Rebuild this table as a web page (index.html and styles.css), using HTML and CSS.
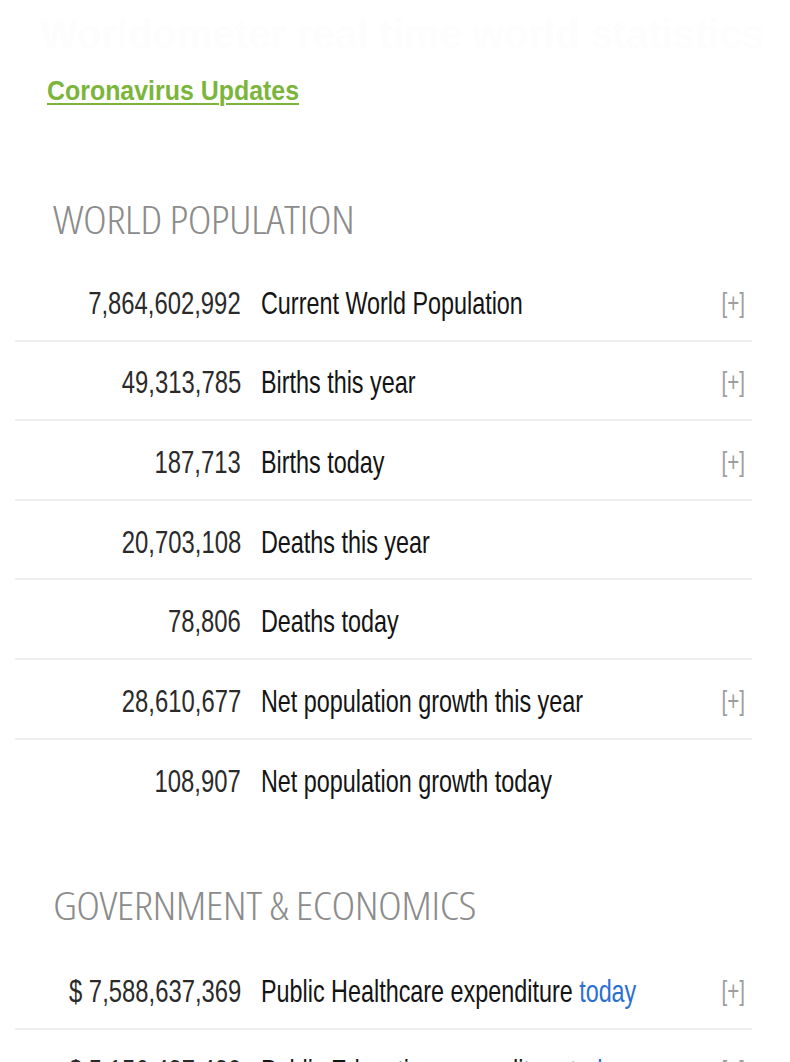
FILE: index.html
```html
<!DOCTYPE html>
<html>
<head>
<meta charset="utf-8">
<link rel="stylesheet" href="styles.css">
</head>
<body>
<div class="page">
  <div class="top-ghost">Worldometer real time world statistics</div>
  <div class="covid-wrap"><a class="covid" href="#">Coronavirus Updates</a></div>

  <section class="block world">
    <h2 class="heading">WORLD POPULATION</h2>
    <div class="rows">
      <div class="row"><span class="num">7,864,602,992</span><span class="label">Current World Population</span><span class="more">[+]</span></div>
      <div class="row"><span class="num">49,313,785</span><span class="label">Births this year</span><span class="more">[+]</span></div>
      <div class="row"><span class="num">187,713</span><span class="label">Births today</span><span class="more">[+]</span></div>
      <div class="row"><span class="num">20,703,108</span><span class="label">Deaths this year</span><span class="more"></span></div>
      <div class="row"><span class="num">78,806</span><span class="label">Deaths today</span><span class="more"></span></div>
      <div class="row"><span class="num">28,610,677</span><span class="label">Net population growth this year</span><span class="more">[+]</span></div>
      <div class="row last"><span class="num">108,907</span><span class="label">Net population growth today</span><span class="more"></span></div>
    </div>
  </section>

  <section class="block gov">
    <h2 class="heading">GOVERNMENT &amp; ECONOMICS</h2>
    <div class="rows">
      <div class="row"><span class="num">$ 7,588,637,369</span><span class="label">Public Healthcare expenditure <a class="today" href="#">today</a></span><span class="more">[+]</span></div>
      <div class="row"><span class="num">$ 5,156,437,430</span><span class="label">Public Education expenditure <a class="today" href="#">today</a></span><span class="more">[+]</span></div>
    </div>
  </section>
</div>
</body>
</html>
```

FILE: styles.css
```css
html, body {
  margin: 0;
  padding: 0;
  background: #ffffff;
}

.page {
  width: 790px;
  height: 1062px;
  overflow: hidden;
  font-family: "Liberation Sans", Arial, sans-serif;
  color: #1e1e1e;
}

.top-ghost {
  height: 50px;
  padding: 14px 0 0 40px;
  font-size: 40px;
  font-weight: bold;
  color: #fdfdfd;
  white-space: nowrap;
  box-sizing: border-box;
  margin-bottom: 25px;
  line-height: 40px;
}

.covid-wrap {
  padding-left: 47px;
  height: 32px;
}

.covid {
  display: inline-block;
  transform: scaleX(0.89);
  transform-origin: left center;
  font-size: 28px;
  font-weight: bold;
  color: #7cb53c;
  text-decoration: underline;
  text-decoration-thickness: 2px;
  text-underline-offset: 3px;
  line-height: 32px;
}

.block {
  margin-left: 15px;
  width: 737px;
}

.world {
  margin-top: 90px;
}

.gov {
  margin-top: 64px;
}

.heading {
  margin: 4px 0 0 38px;
  font-family: "Open Sans", sans-serif;
  font-weight: 300;
  font-stretch: 75%;
  font-size: 39px;
  line-height: 44px;
  color: #8c8c8c;
  letter-spacing: -0.5px;
  white-space: nowrap;
  transform: scaleX(1.16);
  transform-origin: left center;
}

.rows {
  margin-top: 21px;
}

.gov .rows {
  margin-top: 23px;
}

.row {
  display: grid;
  grid-template-columns: 226px minmax(0, 1fr) 40px;
  column-gap: 20px;
  align-items: center;
  height: 79.6px;
  padding-top: 4px;
  box-sizing: border-box;
  border-bottom: 2px solid #eeeeee;
  font-size: 32px;
  line-height: 36px;
}

.row.last {
  border-bottom: none;
}

.num {
  justify-self: end;
  text-align: right;
  white-space: nowrap;
  color: #2a2a2a;
  transform: scaleX(0.745);
  transform-origin: right center;
}

.label {
  white-space: nowrap;
  color: #141414;
  transform: scaleX(0.73);
  transform-origin: left center;
}

.more {
  font-size: 27px;
  color: #9d9d9d;
  text-align: right;
  padding-right: 11px;
  transform: scaleX(0.76);
  transform-origin: right center;
}

.today {
  color: #2b6fd1;
  text-decoration: none;
}
```
